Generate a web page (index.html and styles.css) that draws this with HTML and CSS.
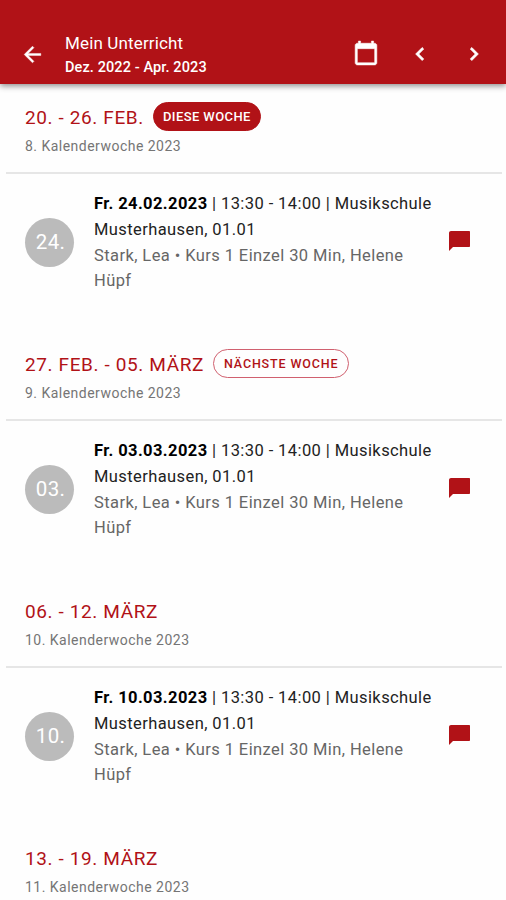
FILE: index.html
```html
<!DOCTYPE html>
<html lang="de">
<head>
    <meta charset="UTF-8">
    <title>Mein Unterricht</title>
    <meta name="viewport" content="width=device-width, initial-scale=1.0">
    <link rel="stylesheet" href="styles.css">
</head>
<body>
<header class="toolbar">
    <svg class="back" viewBox="0 0 24 24"><path d="M20 11H7.830l5.590-5.590L12 4l-8 8 8 8 1.410-1.410L7.830 13H20v-2z"/></svg>
    <div class="heading">
        <h1>Mein Unterricht</h1>
        <p>Dez. 2022 - Apr. 2023</p>
    </div>
    <svg class="calendar" viewBox="0 0 24 24"><path d="M20 3h-1V1h-2v2H7V1H5v2H4c-1.100 0-2 .9-2 2v16c0 1.100.9 2 2 2h16c1.100 0 2-.9 2-2V5c0-1.100-.9-2-2-2zm0 18H4V8h16v13z"/></svg>
    <svg class="prev" viewBox="0 0 24 24"><path d="M15.410 7.410L14 6l-6 6 6 6 1.410-1.410L10.830 12z"/></svg>
    <svg class="next" viewBox="0 0 24 24"><path d="M10 6L8.590 7.410 13.170 12l-4.580 4.590L10 18l6-6z"/></svg>
</header>
<main>
    <section class="week">
        <div class="week-head">
            <div class="week-title">
                <h2>20. - 26. FEB.</h2>
                <span class="badge full">DIESE WOCHE</span>
            </div>
            <p class="kw">8. Kalenderwoche 2023</p>
        </div>
        <div class="lesson">
            <div class="day">24.</div>
            <div class="info">
                <p><b>Fr. 24.02.2023</b> | 13:30 - 14:00 | Musikschule<br>Musterhausen, 01.01</p>
                <p class="course">Stark, Lea • Kurs 1 Einzel 30 Min, Helene Hüpf</p>
            </div>
            <svg class="chat" viewBox="0 0 24 24"><path d="M22 2H4c-1.100 0-2 .9-2 2v18l4-4h16c.6 0 1-.4 1-1V3c0-.6-.4-1-1-1z"/></svg>
        </div>
    </section>
    <section class="week">
        <div class="week-head">
            <div class="week-title">
                <h2>27. FEB. - 05. MÄRZ</h2>
                <span class="badge">NÄCHSTE WOCHE</span>
            </div>
            <p class="kw">9. Kalenderwoche 2023</p>
        </div>
        <div class="lesson">
            <div class="day">03.</div>
            <div class="info">
                <p><b>Fr. 03.03.2023</b> | 13:30 - 14:00 | Musikschule<br>Musterhausen, 01.01</p>
                <p class="course">Stark, Lea • Kurs 1 Einzel 30 Min, Helene Hüpf</p>
            </div>
            <svg class="chat" viewBox="0 0 24 24"><path d="M22 2H4c-1.100 0-2 .9-2 2v18l4-4h16c.6 0 1-.4 1-1V3c0-.6-.4-1-1-1z"/></svg>
        </div>
    </section>
    <section class="week">
        <div class="week-head">
            <div class="week-title">
                <h2>06. - 12. MÄRZ</h2>
            </div>
            <p class="kw">10. Kalenderwoche 2023</p>
        </div>
        <div class="lesson">
            <div class="day">10.</div>
            <div class="info">
                <p><b>Fr. 10.03.2023</b> | 13:30 - 14:00 | Musikschule<br>Musterhausen, 01.01</p>
                <p class="course">Stark, Lea • Kurs 1 Einzel 30 Min, Helene Hüpf</p>
            </div>
            <svg class="chat" viewBox="0 0 24 24"><path d="M22 2H4c-1.100 0-2 .9-2 2v18l4-4h16c.6 0 1-.4 1-1V3c0-.6-.4-1-1-1z"/></svg>
        </div>
    </section>
    <section class="week">
        <div class="week-head">
            <div class="week-title">
                <h2>13. - 19. MÄRZ</h2>
            </div>
            <p class="kw">11. Kalenderwoche 2023</p>
        </div>
    </section>
</main>
</body>
</html>
```
FILE: styles.css
```css
*{margin: 0;padding: 0;box-sizing: border-box;}
body{
    display: flex;
    flex-direction: column;
    height: 100vh;
    overflow: hidden;
    background-color: #fefefe;
    font-family: Roboto, "Liberation Sans", sans-serif;
}
svg{
    display: block;
    flex: none;
    fill: #fff;
}

/* toolbar */
.toolbar{
    display: flex;
    align-items: center;
    flex: none;
    height: 84px;
    padding: 24px 19px 0 20px;
    color: #fff;
    background-color: #b11217;
    box-shadow: 0 2px 6px rgba(0,0,0,.45);
    z-index: 1;
}
.toolbar .back{
    width: 25px;
    height: 25px;
    stroke: #fff;
    stroke-width: .4;
}
.heading{
    flex: 1;
    padding: 3px 0 0 20px;
}
.heading h1{
    font-size: 17px;
    line-height: 24px;
    font-weight: 400;
    letter-spacing: .15px;
}
.heading p{
    font-size: 14.500px;
    line-height: 25px;
    font-weight: 500;
    letter-spacing: .1px;
}
.toolbar .calendar{
    width: 26px;
    height: 26px;
    margin: 0 28px 2px 0;
    stroke: #fff;
    stroke-width: .5;
}
.toolbar .prev,.toolbar .next{
    width: 26px;
    height: 26px;
    margin-bottom: 1px;
    stroke: #fff;
    stroke-width: .7;
}
.toolbar .next{
    margin-left: 28px;
}

/* weeks */
main{
    flex: 1;
    overflow: hidden;
}
.week{
    height: 247px;
}
.week-head{
    height: 90px;
    margin: 0 4px 0 6px;
    padding: 18px 19px 0;
    border-bottom: 2px solid #e6e6e6;
}
.week-title{
    display: flex;
    align-items: center;
    height: 30px;
}
.week-title h2{
    color: #b11217;
    font-size: 19px;
    font-weight: 400;
    letter-spacing: .62px;
}
.badge{
    height: 29px;
    margin: 0 0 1px 9px;
    padding: 0 10px;
    border: 1px solid #d0606f;
    border-radius: 15px;
    color: #b11217;
    font-size: 12.500px;
    line-height: 27px;
    font-weight: 500;
    letter-spacing: .85px;
}
.badge.full{
    padding: 0 9px;
    border-color: #b11217;
    color: #fff;
    background-color: #b11217;
    font-size: 13px;
    letter-spacing: .4px;
}
.kw{
    color: #757575;
    font-size: 14px;
    line-height: 28px;
    letter-spacing: .48px;
}
.lesson{
    display: flex;
    align-items: center;
    margin-top: 17px;
    padding: 0 35px 0 25px;
}
.day{
    width: 49px;
    height: 49px;
    padding-left: 2px;
    border-radius: 50%;
    color: #fff;
    background-color: #bbb;
    font-size: 20.500px;
    line-height: 49px;
    text-align: center;
    letter-spacing: .3px;
}
.info{
    flex: 1;
    margin: 0 10px 0 20px;
    color: #222;
    font-size: 16.500px;
    line-height: 25.800px;
    letter-spacing: .41px;
}
.info b{
    color: #000;
    font-weight: 700;
}
.info .course{
    color: #666;
}
.lesson .chat{
    width: 24px;
    height: 24px;
    margin-bottom: 4px;
    fill: #b11217;
}
```
